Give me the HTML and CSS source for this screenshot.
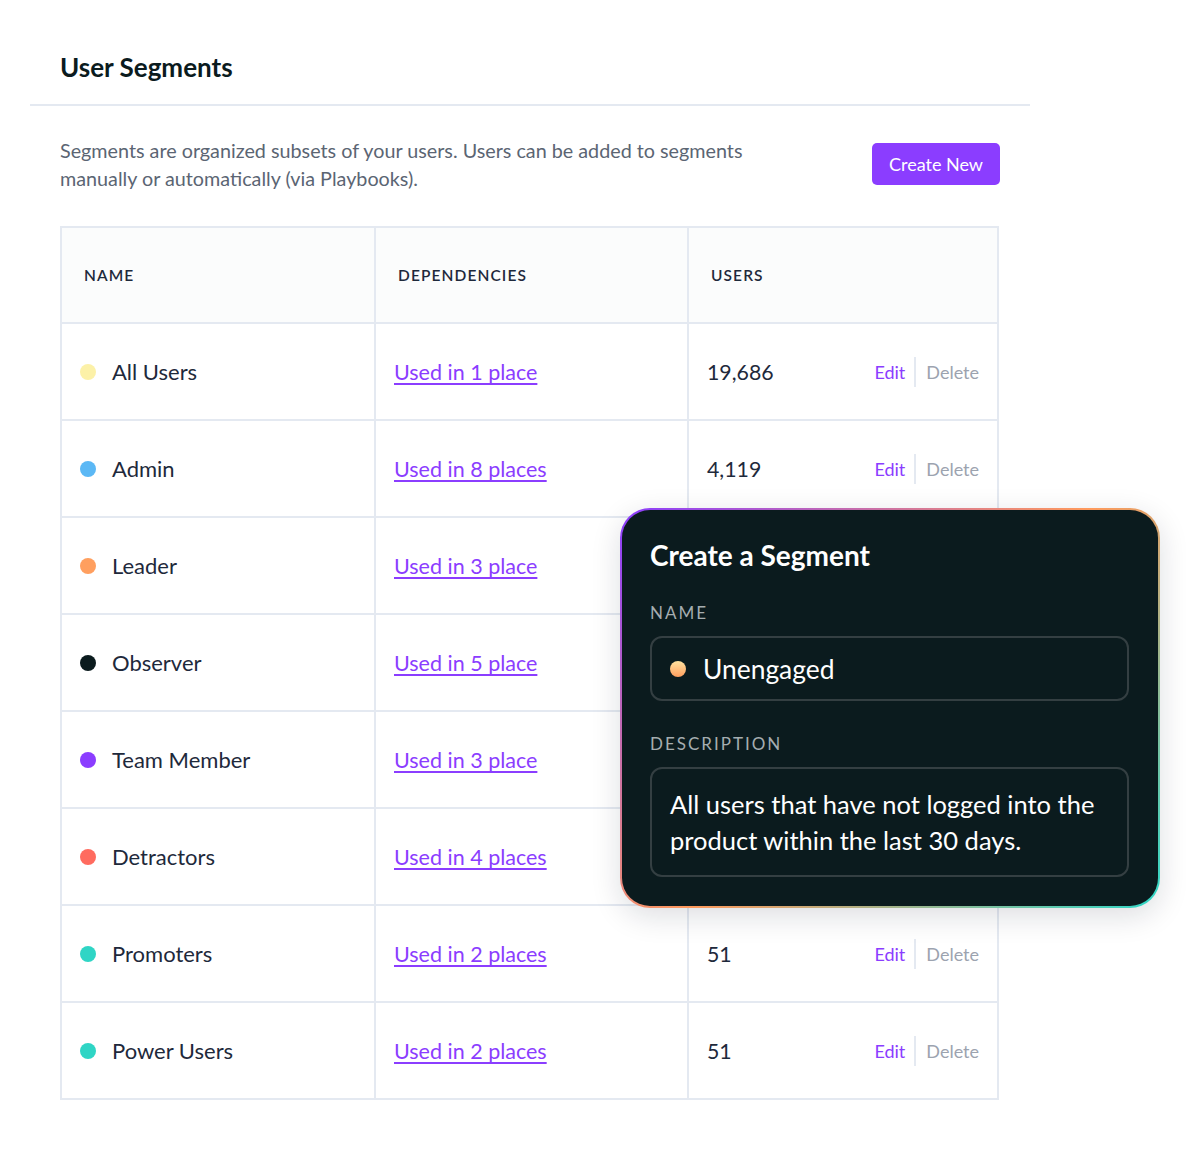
FILE: index.html
```html
<!DOCTYPE html>
<html lang="en">
<head>
<meta charset="utf-8">
<title>User Segments</title>
<link rel="stylesheet" href="styles.css">
</head>
<body>
<div class="page">
  <header class="page-header">
    <h1 class="title">User Segments</h1>
  </header>
  <section class="content">
    <div class="intro">
      <p class="intro-text">Segments are organized subsets of your users. Users can be added to segments manually or automatically (via Playbooks).</p>
      <button class="btn-primary">Create New</button>
    </div>
    <div class="table">
      <div class="th">NAME</div>
      <div class="th">DEPENDENCIES</div>
      <div class="th">USERS</div>

      <div class="td"><span class="dot dot-yellow"></span>All Users</div>
      <div class="td"><a class="link" href="#">Used in 1 place</a></div>
      <div class="td td-users"><span class="num">19,686</span><span class="actions"><a class="edit" href="#">Edit</a><span class="sep"></span><a class="delete" href="#">Delete</a></span></div>

      <div class="td"><span class="dot dot-blue"></span>Admin</div>
      <div class="td"><a class="link" href="#">Used in 8 places</a></div>
      <div class="td td-users"><span class="num">4,119</span><span class="actions"><a class="edit" href="#">Edit</a><span class="sep"></span><a class="delete" href="#">Delete</a></span></div>

      <div class="td"><span class="dot dot-orange"></span>Leader</div>
      <div class="td"><a class="link" href="#">Used in 3 place</a></div>
      <div class="td td-users"></div>

      <div class="td"><span class="dot dot-dark"></span>Observer</div>
      <div class="td"><a class="link" href="#">Used in 5 place</a></div>
      <div class="td td-users"></div>

      <div class="td"><span class="dot dot-purple"></span>Team Member</div>
      <div class="td"><a class="link" href="#">Used in 3 place</a></div>
      <div class="td td-users"></div>

      <div class="td"><span class="dot dot-red"></span>Detractors</div>
      <div class="td"><a class="link" href="#">Used in 4 places</a></div>
      <div class="td td-users"></div>

      <div class="td"><span class="dot dot-teal"></span>Promoters</div>
      <div class="td"><a class="link" href="#">Used in 2 places</a></div>
      <div class="td td-users"><span class="num">51</span><span class="actions"><a class="edit" href="#">Edit</a><span class="sep"></span><a class="delete" href="#">Delete</a></span></div>

      <div class="td"><span class="dot dot-teal"></span>Power Users</div>
      <div class="td"><a class="link" href="#">Used in 2 places</a></div>
      <div class="td td-users"><span class="num">51</span><span class="actions"><a class="edit" href="#">Edit</a><span class="sep"></span><a class="delete" href="#">Delete</a></span></div>
    </div>
  </section>

  <div class="modal">
    <h2 class="modal-title">Create a Segment</h2>
    <div class="field-label">NAME</div>
    <div class="input"><span class="dot dot-grad"></span>Unengaged</div>
    <div class="field-label field-label-2">DESCRIPTION</div>
    <div class="textarea">All users that have not logged into the product within the last 30 days.</div>
  </div>
</div>
</body>
</html>
```

FILE: styles.css
```css
* { box-sizing: border-box; }

html, body {
  margin: 0;
  padding: 0;
  background: #ffffff;
}

body {
  font-family: Lato, "Open Sans", "Liberation Sans", sans-serif;
  color: #1e293b;
}

.page {
  position: relative;
  width: 1186px;
  min-height: 1160px;
  padding-left: 30px;
}

.page-header {
  width: 1000px;
  padding: 51px 30px 21px;
  border-bottom: 2px solid #e4e9f1;
}

.title {
  margin: 0;
  font-size: 26px;
  line-height: 32px;
  font-weight: 700;
  color: #0b1b1e;
}

.content {
  width: 1000px;
  padding: 31px 30px 0;
}

.intro {
  display: flex;
  align-items: center;
  justify-content: space-between;
}

.intro-text {
  margin: 0;
  width: 720px;
  font-size: 19.75px;
  line-height: 28px;
  color: #5b6573;
}

.btn-primary {
  width: 128px;
  height: 42px;
  border: 0;
  border-radius: 5px;
  background: #8b3dff;
  color: #ffffff;
  font-family: inherit;
  font-size: 18px;
  padding: 0;
  margin-top: -2px;
}

.table {
  margin-top: 33px;
  width: 939px;
  display: grid;
  grid-template-columns: 314px 313px 1fr;
  grid-template-rows: 96px;
  grid-auto-rows: 97px;
  border-top: 2px solid #e4e9f1;
  border-left: 2px solid #e4e9f1;
}

.th, .td {
  display: flex;
  align-items: center;
  border-right: 2px solid #e4e9f1;
  border-bottom: 2px solid #e4e9f1;
}

.th {
  padding-left: 22px;
  background: #fbfcfc;
  font-size: 15.5px;
  font-weight: 600;
  letter-spacing: 1.1px;
  color: #1e293b;
}

.td {
  padding-left: 18px;
  font-size: 22px;
  color: #1e293b;
}

.td-users {
  justify-content: space-between;
  padding-right: 18px;
}

.dot {
  flex: none;
  width: 16px;
  height: 16px;
  border-radius: 50%;
  margin-right: 16px;
}

.dot-yellow { background: #fcf1a8; }
.dot-blue { background: #5bb8f5; }
.dot-orange { background: #ff9f5f; }
.dot-dark { background: #0b1b1e; }
.dot-purple { background: #8b3dff; }
.dot-red { background: #ff6b5f; }
.dot-teal { background: #2fd5c5; }
.dot-grad { background: linear-gradient(180deg, #ffe3a0, #ff9e5e); }

.link {
  font-size: 21.5px;
  color: #8b3dff;
  text-decoration: underline;
  text-decoration-thickness: 1.5px;
  text-underline-offset: 3px;
  text-decoration-skip-ink: none;
}

.num {
  font-size: 21.3px;
}

.actions {
  display: flex;
  align-items: center;
  font-size: 18px;
}

.edit {
  color: #8b3dff;
  text-decoration: none;
}

.sep {
  width: 2px;
  height: 30px;
  background: #e4e9f1;
  margin: 0 10px 0 9px;
}

.delete {
  color: #9ca3af;
  text-decoration: none;
}

.modal {
  position: absolute;
  left: 620px;
  top: 508px;
  width: 540px;
  height: 400px;
  padding: 28px 29px 29px 28px;
  border: 2px solid transparent;
  border-radius: 30px;
  background:
    linear-gradient(#0b1b1e, #0b1b1e) padding-box,
    linear-gradient(135deg, #8b3dff 0%, #ff9a5c 50%, #2ed8c8 100%) border-box;
  box-shadow: 0 8px 30px rgba(15, 23, 42, 0.14);
  color: #ffffff;
}

.modal-title {
  margin: 0;
  font-size: 28px;
  line-height: 34px;
  font-weight: 700;
  color: #ffffff;
}

.field-label {
  margin-top: 30px;
  font-size: 17px;
  line-height: 22px;
  letter-spacing: 2px;
  color: #a5adb0;
}

.field-label-2 {
  margin-top: 32px;
}

.input {
  margin-top: 12px;
  height: 65px;
  display: flex;
  align-items: center;
  padding-left: 18px;
  border: 2px solid #343f42;
  border-radius: 12px;
  font-size: 26.4px;
  color: #ffffff;
}

.input .dot {
  margin-right: 17px;
}

.textarea {
  margin-top: 12px;
  height: 110px;
  padding: 17px 18px 16px;
  border: 2px solid #343f42;
  border-radius: 12px;
  font-size: 25.5px;
  line-height: 36px;
  color: #ffffff;
}
```
